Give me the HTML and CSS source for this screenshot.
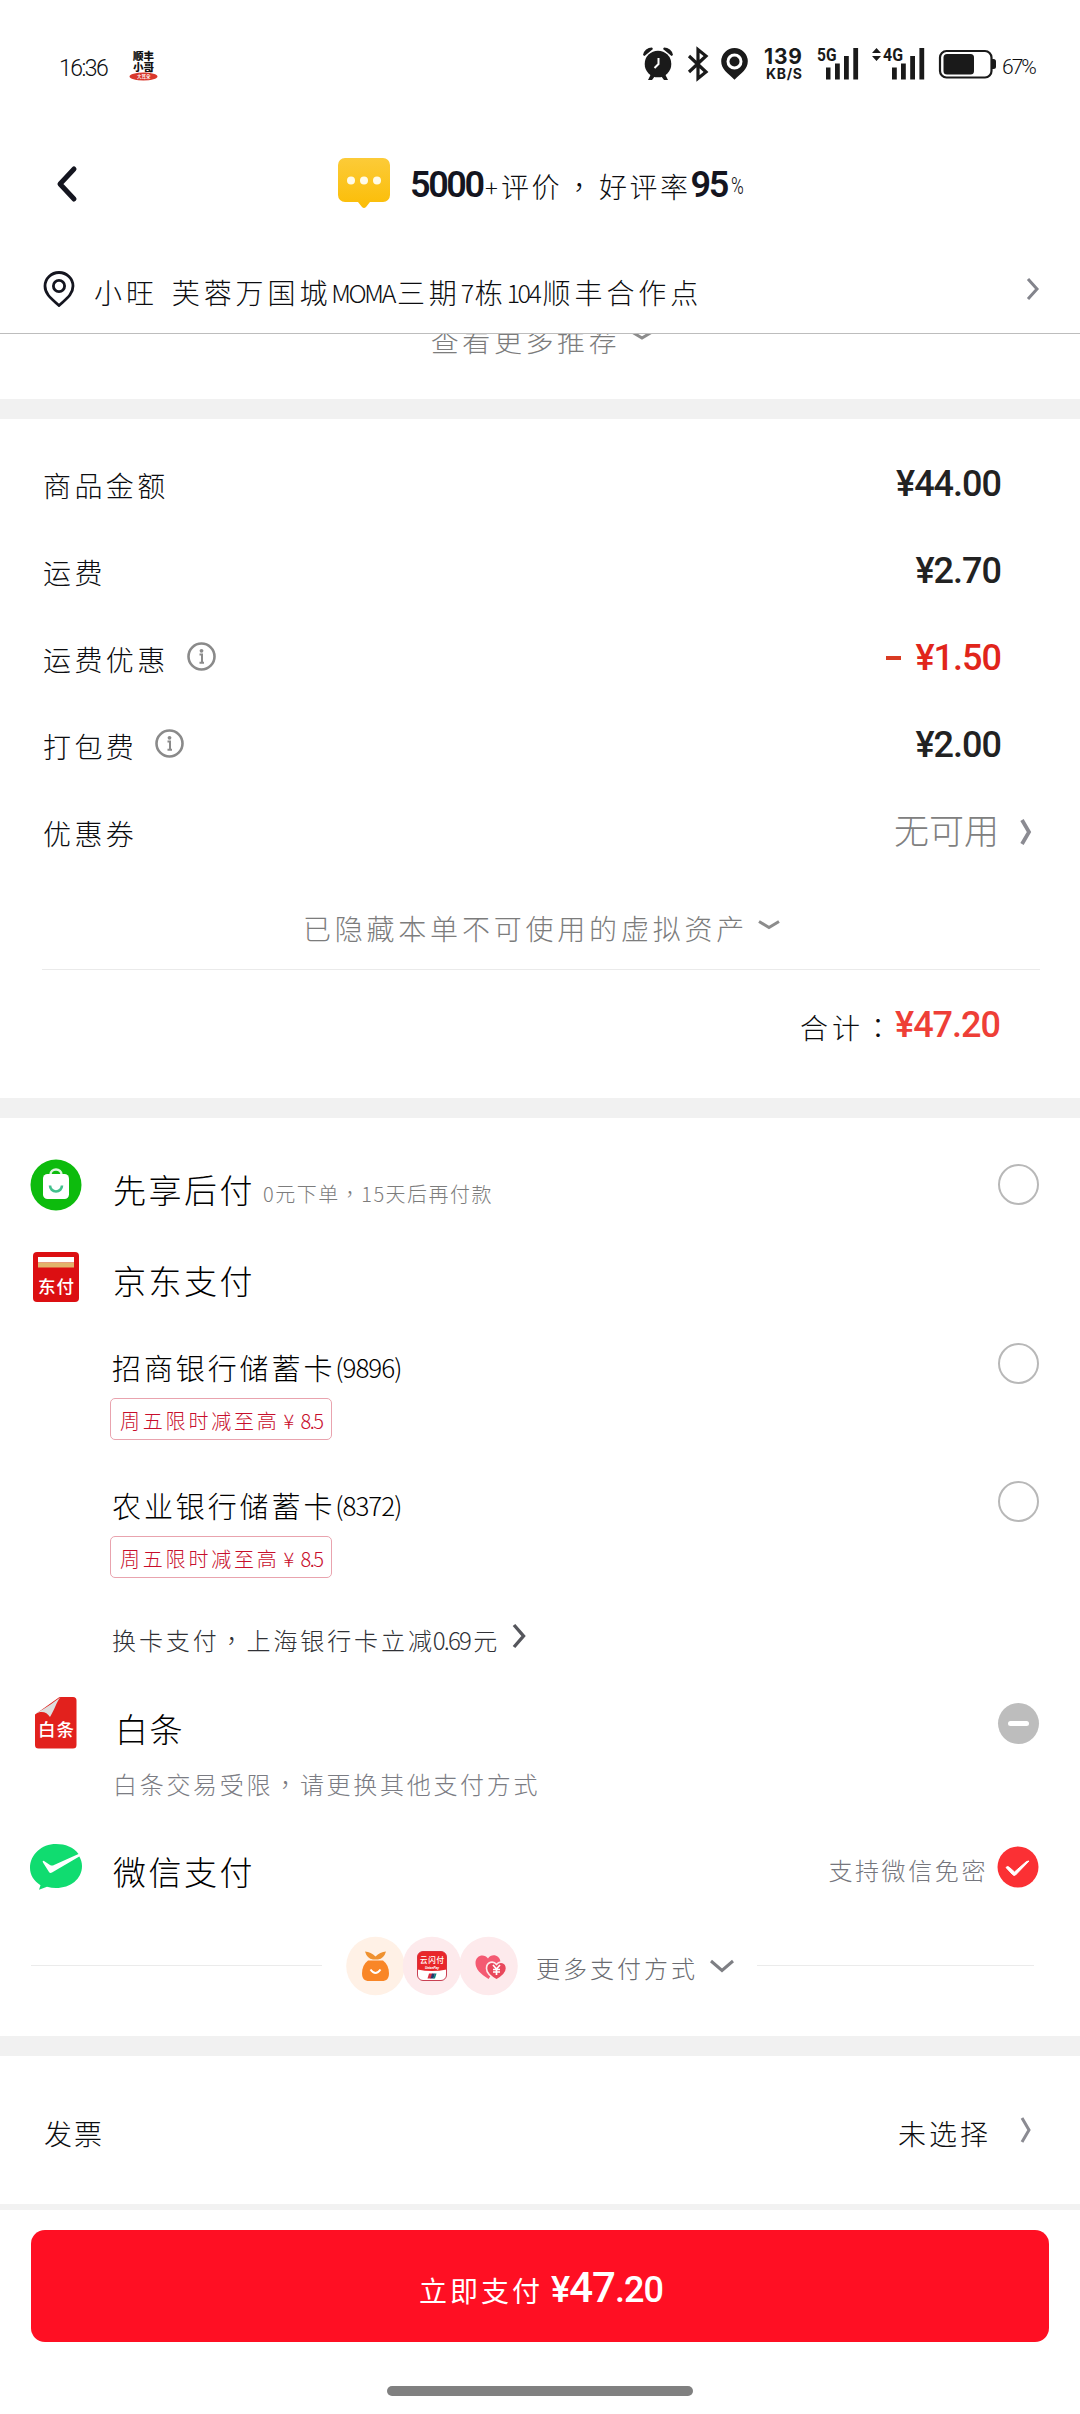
FILE: index.html
```html
<!DOCTYPE html>
<html lang="zh-CN">
<head>
<meta charset="utf-8">
<title>订单支付</title>
<link rel="stylesheet" href="styles.css">
</head>
<body>
<div class="page">
  <header class="top">
    <div class="status">
      <span class="clock">16:36</span>
      <svg class="app-badge" width="29" height="32" viewBox="0 -3 29 32">
        <text x="4" y="8" class="badge-word" textLength="21">顺丰</text>
        <text x="4" y="19" class="badge-word" textLength="21">小哥</text>
        <ellipse cx="14.5" cy="24.5" rx="14" ry="4" fill="#d9382c"/>
        <text x="8" y="26.3" class="badge-mini">大耳朵</text>
      </svg>
      <svg class="indicators" width="356" height="44" viewBox="642 42 356 44" fill="#1a1a1a">
        <circle cx="658" cy="64" r="13.3"/>
        <path d="M643 55a9 9 0 0 1 9-7.5l1 1.5-8.500 7zM673 55a9 9 0 0 0-9-7.500l-1 1.500 8.500 7zM648 80l3-6 4 2-3 4zM668 80l-3-6-4 2 3 4z"/>
        <path d="M658.500 58v6l-4 4" fill="none" stroke="#fff" stroke-width="2"/>
        <path d="M689 56l17 16-8 6.500v-29l8 6.500-17 16" fill="none" stroke="#1a1a1a" stroke-width="3.200"/>
        <path fill-rule="evenodd" d="M734.500 48a13.300 13.300 0 0 0-13.300 13.300c0 8 6.300 11.700 13.300 18.500 7-6.800 13.300-10.500 13.300-18.500a13.300 13.300 0 0 0-13.300-13.300zm0 5.500a8 8 0 1 1 0 16 8 8 0 0 1 0-16z"/>
        <circle cx="734.500" cy="61.500" r="5"/>
        <text x="764" y="63.500" class="net-speed" textLength="38">139</text>
        <text x="766" y="78.700" class="net-unit" textLength="36">KB/S</text>
        <text x="817" y="61" class="net-gen" textLength="19.500" lengthAdjust="spacingAndGlyphs">5G</text>
        <path d="M826 67.500h4.500v12H826zM835 63.500h4.800v16H835zM844 56h4.800v23.500H844zM853.300 48h4.800v31.500h-4.800z"/>
        <path d="M872 53l4.500-5 4.500 5zM872 56l4.500 5 4.500-5z"/>
        <text x="883" y="61" class="net-gen" textLength="20" lengthAdjust="spacingAndGlyphs">4G</text>
        <path d="M892 67.500h4.800v12H892zM901 63.500h4.800v16H901zM910.200 56h4.800v23.500h-4.800zM919.400 48h4.800v31.500h-4.800z"/>
        <rect x="940" y="51" width="51.500" height="26.500" rx="6.500" fill="none" stroke="#1a1a1a" stroke-width="2.200"/>
        <rect x="943.500" y="54" width="30.500" height="20.500" rx="3.500"/>
        <path d="M992 59h1.500q2.500 0 2.500 2.500v5q0 2.500-2.500 2.500H992z"/>
      </svg>
      <span class="charge">67%</span>
    </div>

    <div class="title-bar">
      <svg class="back" width="24" height="38" viewBox="0 0 24 38"><path d="M19 4L5 19l14 15" fill="none" stroke="#14151f" stroke-width="5" stroke-linecap="round" stroke-linejoin="round"/></svg>
      <svg class="bubble" width="52" height="51" viewBox="0 0 52 51">
        <defs>
          <linearGradient id="amber" x1="0" y1="0" x2="0" y2="1"><stop offset="0" stop-color="#fccb38"/><stop offset="1" stop-color="#fbbd06"/></linearGradient>
        </defs>
        <path fill="url(#amber)" d="M7 0h38a7 7 0 0 1 7 7v30a7 7 0 0 1-7 7H32l-4 5q-2 2-4 0l-4-5H7a7 7 0 0 1-7-7V7a7 7 0 0 1 7-7z"/>
        <g fill="#fffbe8"><circle cx="13" cy="22.500" r="4"/><circle cx="26" cy="22.500" r="4"/><circle cx="39" cy="22.500" r="4"/></g>
      </svg>
      <div class="rating"><b class="big first">5000</b><span class="plus">+</span><span>评价</span><span class="comma mark" lang="zh-TW">，</span><span>好评率</span><b class="big">95</b><span class="pct">%</span></div>
    </div>

    <div class="address">
      <svg width="32" height="36" viewBox="0 0 32 36" fill="none" stroke="#14151f" stroke-width="2.800"><path d="M16 1.500A14 13.500 0 0 0 2 15c0 8.500 7 13 14 19.500C23 28 30 23.500 30 15A14 13.500 0 0 0 16 1.500z"/><circle cx="16" cy="15" r="5.600"/></svg>
      <div class="address-text"><span>小旺</span><span class="place">芙蓉万国城</span><span class="latin">MOMA</span><span>三期</span><span class="latin">7</span><span>栋</span><span class="latin">104</span><span>顺丰合作点</span></div>
      <svg class="go" width="14" height="24" viewBox="0 0 14 24"><path d="M2 2l9 10-9 10" fill="none" stroke="#83848c" stroke-width="3"/></svg>
    </div>
  </header>

  <section class="suggest">
    <div class="suggest-line"><span>查看更多推荐</span><svg width="22" height="12" viewBox="0 0 22 12"><path d="M1 2l10 6 10-6" fill="none" stroke="#8c8c8c" stroke-width="3"/></svg></div>
  </section>

  <section class="fees">
    <div class="fee"><span class="label">商品金额</span><span class="price">¥44.00</span></div>
    <div class="fee"><span class="label">运费</span><span class="price">¥2.70</span></div>
    <div class="fee"><span class="label">运费优惠</span>
      <svg class="info" width="29" height="29" viewBox="0 0 29 29"><circle cx="14.500" cy="14.500" r="13" fill="none" stroke="#8a8a8a" stroke-width="2.600"/><circle cx="14.500" cy="8.800" r="1.900" fill="#8a8a8a"/><path d="M12.500 12.500h2.500v8M12.500 20.700h4.500" fill="none" stroke="#8a8a8a" stroke-width="2"/></svg>
      <span class="price cut"><span class="minus"></span>¥1.50</span></div>
    <div class="fee"><span class="label">打包费</span>
      <svg class="info" width="29" height="29" viewBox="0 0 29 29"><circle cx="14.500" cy="14.500" r="13" fill="none" stroke="#8a8a8a" stroke-width="2.600"/><circle cx="14.500" cy="8.800" r="1.900" fill="#8a8a8a"/><path d="M12.500 12.500h2.500v8M12.500 20.700h4.500" fill="none" stroke="#8a8a8a" stroke-width="2"/></svg>
      <span class="price">¥2.00</span></div>
    <div class="fee linked"><span class="label">优惠券</span><span class="none">无可用</span>
      <svg width="14" height="28" viewBox="0 0 14 28"><path d="M3 2l7 12-7 12" fill="none" stroke="#8b8b92" stroke-width="3.800"/></svg></div>
    <div class="hidden-assets"><span>已隐藏本单不可使用的虚拟资产</span><svg width="22" height="12" viewBox="0 0 22 12"><path d="M1 2.500l10 6 10-6" fill="none" stroke="#8c8c8c" stroke-width="3"/></svg></div>
    <div class="total"><span class="total-label">合计<span class="mark" lang="zh-TW">：</span></span><span class="price due">¥47.20</span></div>
  </section>

  <section class="pay">
    <div class="method later">
      <svg class="logo" width="52" height="52" viewBox="0 0 52 52"><circle cx="26" cy="26" r="25.500" fill="#0dbb0d"/><path d="M20.500 15.500a5.500 5 0 0 1 11 0" fill="none" stroke="#dff8df" stroke-width="2.400"/><rect x="13" y="15" width="26" height="25" rx="4.500" fill="#fff"/><path d="M20 26.500a6 6 0 0 0 12 0" fill="none" stroke="#42c08c" stroke-width="2.600"/></svg>
      <span class="name">先享后付</span><span class="hint">0元下单<span class="mark" lang="zh-TW">，</span>15天后再付款</span><i class="radio"></i>
    </div>
    <div class="method jd">
      <svg class="logo" width="52" height="52" viewBox="0 0 52 52"><rect x="3" y="1" width="46" height="50" rx="4" fill="#dc0f12"/><rect x="8" y="6" width="36" height="5.500" fill="#fff"/><rect x="8" y="11.500" width="36" height="5" fill="#e2b46c"/><text x="8" y="42" class="logo-word" textLength="36">东付</text></svg>
      <span class="name">京东支付</span>
    </div>
    <div class="card">
      <div class="card-row"><span class="card-name">招商银行储蓄卡</span><span class="card-no">(9896)</span><i class="radio"></i></div>
      <div class="tag"><span>周五限时减至高</span><span class="yen">¥</span><span class="amount">8.5</span></div>
    </div>
    <div class="card">
      <div class="card-row"><span class="card-name">农业银行储蓄卡</span><span class="card-no">(8372)</span><i class="radio"></i></div>
      <div class="tag"><span>周五限时减至高</span><span class="yen">¥</span><span class="amount">8.5</span></div>
    </div>
    <div class="switch"><span>换卡支付<span class="mark" lang="zh-TW">，</span>上海银行卡立减</span><span class="save">0.69</span><span>元</span><svg width="14" height="26" viewBox="0 0 14 26"><path d="M2 2l9.500 11L2 24" fill="none" stroke="#55565c" stroke-width="3.400"/></svg></div>
    <div class="method baitiao">
      <svg class="logo" width="52" height="52" viewBox="0 0 52 52"><path d="M29.500 0H43a3.500 3.500 0 0 1 3.500 3.500v44.500a3.500 3.500 0 0 1-3.500 3.500H8.500A3.500 3.500 0 0 1 5 48V17.500z" fill="#e2211d"/><path d="M30.500 0C24 5 18 10 5 16.500c7-3 12-1.500 15 3.500 5-8 6-14 10.500-20z" fill="#dedede"/><text x="8" y="39" class="logo-word" textLength="36">白条</text></svg>
      <span class="name">白条</span><i class="radio blocked"></i>
    </div>
    <div class="reason">白条交易受限<span class="mark" lang="zh-TW">，</span>请更换其他支付方式</div>
    <div class="method wechat">
      <svg class="logo" width="52" height="46" viewBox="0 0 52 46"><path d="M26 0C11.500 0 0 10.500 0 24c0 7 4 13 10.500 17.200L9 45.800l8-3c3 .8 6 1.200 9 1.200 14.500 0 26-9 26-22 0-3.600-1-6.600-2.700-9.500L22 28.500q-2 1-3-.5l-6-9.500q-1-2.500 1-1.500l6 4q2 1 4 0l24.500-11C43.500 3 35.500 0 26 0z" fill="#10dc70"/></svg>
      <span class="name">微信支付</span><span class="nopass">支持微信免密</span>
      <svg class="picked" width="42" height="42" viewBox="0 0 42 42"><circle cx="21" cy="21" r="20.500" fill="#fb3034"/><path d="M9 21.500q1.500-2 3.500 0l5 4.500L29.500 15.500l2.500-.5-13.500 14q-1.500 1-3-.5z" fill="#fff" stroke="#fff" stroke-width="1"/></svg>
    </div>
    <div class="more">
      <span class="rule left"></span>
      <svg class="wallets" width="172" height="60" viewBox="0 0 172 60">
        <circle cx="29.500" cy="30" r="29.300" fill="#fff1e6"/><circle cx="86" cy="30" r="29.300" fill="#fdeaec"/><circle cx="142.500" cy="30" r="29.300" fill="#fdeaec"/>
        <path d="M19 15.500q6 .5 10.500 5 4.500-4.500 10.500-5-2 7-8 8h-5q-6-1-8-8z" fill="#ef912f"/><path d="M22 24.500h15c4 3 6 7.500 6 13 0 5-2.500 7.500-7 7.500H23c-4.500 0-7-2.500-7-7.500 0-5.500 2-10 6-13z" fill="#f98627"/><path d="M24.500 33.500q5 7 10 0" fill="none" stroke="#fff" stroke-width="2"/>
        <rect x="71.500" y="15.500" width="29" height="29" rx="5.500" fill="#fff" stroke="#c94053"/><path d="M77 15.500h18a5.500 5.500 0 0 1 5.500 5.500v12.500q-14.500 3-29 0V21a5.500 5.500 0 0 1 5.500-5.500z" fill="#e9262a"/><text x="74" y="27" class="quick" textLength="24">云闪付</text><text x="79" y="32.800" class="quick-en" textLength="14">UnionPay</text><path d="M83 37.500h3.500l-1.500 5h-3.500z" fill="#d92f42"/><path d="M86 37.500h3l-1.500 5h-3z" fill="#26356b"/><path d="M89 37.500h1.500l-1.500 5h-2z" fill="#0c8180"/>
        <path d="M142.500 43c-8-5-13-10-13-16 0-8 9-10 12.500-4.500C145.500 17 154 19 154.500 26l-12 17z" fill="#f45a72"/><path d="M150.500 44c-7-4-10-7.500-10-11.500 0-7 7-8 10-4 3-4 10-3 10 4 0 4-3 7.500-10 11.500z" fill="#e9485c" stroke="#fdeaec" stroke-width="1.600"/><path d="M147 29l3.500 4 3.500-4M150.500 33v6M147 33.500h7M147 36h7" fill="none" stroke="#fff" stroke-width="1.700"/>
      </svg>
      <span class="more-label">更多支付方式</span>
      <svg width="24" height="14" viewBox="0 0 24 14"><path d="M1 2l11 9.500L23 2" fill="none" stroke="#7e7f84" stroke-width="3"/></svg>
      <span class="rule right"></span>
    </div>
  </section>

  <section class="invoice">
    <span class="label">发票</span><span class="choice">未选择</span>
    <svg width="14" height="28" viewBox="0 0 14 28"><path d="M3 2l7 12-7 12" fill="none" stroke="#8b8b92" stroke-width="3"/></svg>
  </section>

  <footer class="bottom">
    <div class="submit"><span class="verb">立即支付</span><span class="sum">¥<b>47</b>.20</span></div>
    <div class="home"></div>
  </footer>
</div>
</body>
</html>
```
FILE: styles.css
```css
* { box-sizing: border-box; }

body {
  margin: 0;
  background: #fff;
  color: #0c0d10;
  font-family: "Noto Sans CJK SC", "Noto Sans", sans-serif;
  font-weight: 300;
}

.page {
  width: 1080px;
  height: 2414px;
  overflow: hidden;
  display: flex;
  flex-direction: column;
  white-space: nowrap;
}

svg { display: block; flex: none; }

/* Punctuation centred in its cell */
.mark { font-family: "Noto Sans CJK TC", sans-serif; }

/* Fixed top area */
.top { height: 334px; border-bottom: 1px solid #bdbdbd; flex: none; }

.status { display: flex; align-items: center; height: 128px; padding: 0 46px 0 59px; }
.clock { width: 70px; font: 300 23px Roboto, sans-serif; letter-spacing: -1.500px; padding-top: 8px; }
.app-badge { margin-top: 1px; }
.indicators { margin-left: auto; }
.charge { width: 36px; font: 300 21px Roboto, sans-serif; letter-spacing: -2px; padding: 5px 0 0 4px; }
.badge-word { font: 900 10.500px/1 "Noto Sans CJK SC", sans-serif; fill: #111; }
.badge-mini { font: 500 4.500px "Noto Sans CJK SC", sans-serif; fill: #fff; }
.net-speed { font: 700 21px Inter, sans-serif; }
.net-unit { font: 700 14px Inter, sans-serif; }
.net-gen { font: 700 18px Roboto, sans-serif; }

.title-bar { display: flex; align-items: center; height: 110px; padding: 0 55px; }
.back { margin-top: 1px; }
.bubble { margin: 1px 0 0 259px; }
.rating { display: flex; align-items: center; margin-left: 20px; font-size: 28px; letter-spacing: 2.500px; height: 50px; }
.rating span { padding-top: 6px; }
.rating .plus { width: 16px; font-size: 24px; letter-spacing: 0; }
.rating .comma { width: 37px; padding-left: 3px; }
.big { font: 600 36px Roboto, sans-serif; letter-spacing: -2.400px; color: #14151f; padding-top: 3px; }
.rating .first { width: 75px; }
.rating .pct { width: 16px; font: 300 23px Roboto, sans-serif; margin-left: 4px; letter-spacing: 0; transform: scaleX(.75); transform-origin: 0 50%; }

.address { display: flex; align-items: center; height: 94px; padding: 8px 40px 0 43px; }
.address-text { display: flex; align-items: center; padding: 6px 0 0 19px; font-size: 28px; letter-spacing: 3.900px; }
.place { margin-left: 14px; }
.latin { font-size: 25px; letter-spacing: -2.400px; padding: 0 3px 0 0; }
.address .go { margin-left: auto; }

/* Recommendation block, partly covered by the header */
.suggest { height: 85px; flex: none; border-bottom: 20px solid #f1f1f1; overflow: hidden; }
.suggest-line { display: flex; justify-content: center; align-items: center; gap: 11px; height: 40px; margin-top: -14px; padding-left: 4px; font-size: 28px; letter-spacing: 3.600px; color: #7c7c7c; }
.suggest-line svg { margin-bottom: 8px; }

/* Price breakdown */
.fees { height: 699px; flex: none; padding-top: 21px; border-bottom: 20px solid #f1f1f1; }
.fee { display: flex; align-items: center; height: 87px; padding: 0 79px 0 43px; }
.label { font-size: 28px; letter-spacing: 3.400px; margin-top: 3px; }
.info { margin-left: 18px; margin-bottom: 2px; }
.price { margin-left: auto; font: 500 36px Roboto, sans-serif; letter-spacing: -1px; color: #222; }
.cut { display: flex; align-items: center; color: #e1251b; }
.minus { width: 15px; height: 4px; margin-right: 14px; background: #d93a22; }
.linked { padding-right: 47px; }
.none { margin-left: auto; margin-right: 20px; font-size: 35px; color: #808080; margin-top: -6px; }
.hidden-assets { display: flex; justify-content: center; align-items: center; gap: 10px; height: 95px; margin: 0 40px 0 42px; border-bottom: 1px solid #eaeaea; font-size: 28px; letter-spacing: 3.800px; color: #7c7c7c; padding-top: 11px; padding-left: 1px; }
.hidden-assets svg { margin-bottom: 6px; }
.total { display: flex; justify-content: flex-end; align-items: center; height: 109px; padding-right: 80px; }
.total-label { font-size: 28px; letter-spacing: 4px; padding-top: 4px; }
.total .due { margin-left: -1px; color: #ee3f37; }

/* Payment methods */
.pay { height: 938px; flex: none; padding-top: 26px; border-bottom: 20px solid #f1f1f1; }
.method { display: flex; align-items: center; padding: 0 41px 0 30px; }
.name { margin-left: 31px; font-size: 33px; letter-spacing: 2.500px; padding-top: 9px; color: #000; }
.logo-word { font: 500 17.500px "Noto Sans CJK SC", sans-serif; fill: #fff; }
.hint { font-size: 20px; letter-spacing: 1.500px; color: #7c7c7c; margin-left: 8px; padding-top: 18px; }
.radio { flex: none; width: 41px; height: 41px; margin-left: auto; border: 2.500px solid #b8b8b8; border-radius: 50%; }
.later { height: 81px; }
.jd { height: 103px; }
.jd .name { padding-top: 7px; }

.card { height: 138px; padding: 1px 41px 0 110px; }
.card-row { display: flex; align-items: center; height: 69px; }
.card-name { margin-left: 2px; font-size: 29px; letter-spacing: 2.900px; padding-top: 6px; color: #000; }
.card-no { font-size: 26px; letter-spacing: -1px; padding-top: 5px; color: #000; }
.tag { display: flex; align-items: center; width: 222px; height: 42px; padding: 3px 0 0 9px; border: 1.500px solid #e9a3ae; border-radius: 5px; font-size: 20px; letter-spacing: 2.800px; color: #c80e2c; }
.yen { width: 17px; margin-left: 4px; }
.amount { letter-spacing: -1.500px; }

.switch { display: flex; align-items: center; height: 64px; padding-left: 112px; font-size: 24px; letter-spacing: 2.900px; color: #303136; }
.switch > span { padding-top: 6px; }
.switch .save { letter-spacing: -1.800px; margin-left: -2px; padding-right: 3px; }
.switch svg { margin-left: 12px; }

.baitiao { height: 50px; margin-top: 30px; }
.baitiao .name { margin-left: 33px; letter-spacing: 1.500px; }
.radio.blocked { display: flex; align-items: center; justify-content: center; border: 0; background: #bdbdbd; }
.blocked::before { content: ""; width: 21px; height: 5px; border-radius: 2.500px; background: #fff; }
.reason { height: 74px; line-height: 72px; padding-left: 113px; font-size: 24px; letter-spacing: 2.700px; color: #7b7c83; }

.wechat { height: 89px; }
.nopass { margin-left: auto; margin-right: 9px; font-size: 24px; letter-spacing: 2.600px; color: #75767d; padding-top: 6px; }

.more { display: flex; align-items: center; height: 109px; padding-left: 31px; }
.rule { flex: none; height: 1px; background: #ebebeb; }
.rule.left { width: 291px; }
.rule.right { width: 277px; margin-left: 23px; }
.wallets { margin: 0 18px 0 24px; }
.more-label { font-size: 24px; letter-spacing: 3px; color: #6a6b70; padding-top: 4px; margin-right: 12px; }
.quick { font: 500 7.500px "Noto Sans CJK SC", sans-serif; fill: #fff; }
.quick-en { font: italic 700 3.500px Roboto, sans-serif; fill: #fff; }

/* Invoice */
.invoice { display: flex; align-items: center; height: 154px; flex: none; padding: 0 47px 0 44px; border-bottom: 6px solid #f2f2f2; }
.invoice .label { margin-top: 6px; letter-spacing: 2px; }
.choice { margin-left: auto; margin-right: 28px; font-size: 28px; letter-spacing: 3px; padding-top: 6px; }

/* Pay button */
.bottom { padding: 20px 31px 0; }
.submit { display: flex; justify-content: center; align-items: center; height: 112px; border-radius: 14px; background: #ff0f23; color: #fff; font-size: 28px; letter-spacing: 3px; padding-left: 2px; }
.verb { font-weight: 400; padding-top: 7px; }
.sum { font: 500 36px Roboto, sans-serif; letter-spacing: -1px; margin-left: 8px; padding-top: 2px; }
.sum b { font-size: 42px; font-weight: 500; }
.home { width: 306px; height: 10px; margin: 44px auto 0; border-radius: 5px; background: #808080; }
```
